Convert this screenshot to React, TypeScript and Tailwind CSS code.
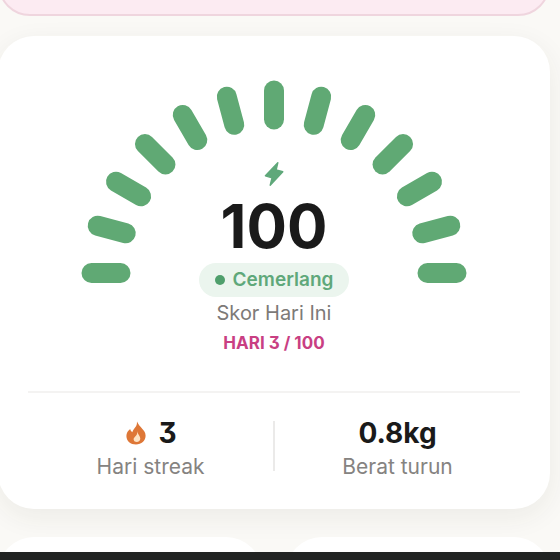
import type { ReactNode } from 'react';

const CENTER = 193;
const ANGLES = Array.from({ length: 13 }, (_, i) => i * 15);

function ScoreArc() {
  return (
    <svg className="w-full" viewBox="0 0 386 203" fill="none" aria-hidden="true">
      {ANGLES.map((angle) => (
        <line
          key={angle}
          x1={10.5}
          y1={CENTER}
          x2={39.5}
          y2={CENTER}
          stroke="#60a974"
          strokeWidth={20}
          strokeLinecap="round"
          transform={`rotate(${angle} ${CENTER} ${CENTER})`}
        />
      ))}
    </svg>
  );
}

function BoltIcon() {
  return (
    <svg className="w-6 h-6" viewBox="0 0 24 24" aria-hidden="true">
      <path
        d="M15.8 0.8 3.4 13.8l6.600 2-1.800 7.400L20.800 9.800l-6.700-1.800z"
        fill="#5fa87a"
        stroke="#5fa87a"
        strokeWidth={1.4}
        strokeLinejoin="round"
      />
    </svg>
  );
}

function FlameIcon() {
  return (
    <svg className="w-6 h-6" viewBox="0 0 24 24" aria-hidden="true">
      <path
        fill="#de7737"
        d="M13 .6c.3 3.600-1.400 5.600-3.200 7.700-.7.9-1.300 1.800-1.500 2.900-1.100-.7-1.900-1.800-2.100-3.200C3.800 9.800 2.400 12.200 2.400 14.900c0 5 4.200 8.500 9.600 8.500s9.600-3.700 9.600-8.700C21.600 8.900 15.400 6.600 13 .6z"
      />
      <path
        fill="#fde3c4"
        d="M13.200 10.200c.3 2.900-.6 3.900-2 5.300-1.300 1.300-1.800 2.100-1.500 3.300.3 1.400 1.500 2.200 3 2.200 2 0 3.600-1.300 3.600-3.400 0-2.900-2.600-4.200-3.100-7.400z"
      />
    </svg>
  );
}

function Stat({ value, label, icon }: { value: string; label: string; icon?: ReactNode }) {
  return (
    <div className="flex flex-col items-center">
      <div className="flex items-center gap-2.5 text-[28px] leading-8 font-bold text-[#1a1a1a]">
        {icon}
        <span>{value}</span>
      </div>
      <div className="mt-1 text-[21px] leading-7 text-[#858381]">{label}</div>
    </div>
  );
}

function App() {
  return (
    <div className="h-screen flex flex-col overflow-hidden bg-[#faf9f6] font-['Inter',sans-serif] [font-feature-settings:'cv09']">
      <main className="flex-1 min-h-0 overflow-hidden">
        <div className="-ml-0.5 mr-2.5">
          {/* Bottom edge of the scrolled banner */}
          <div className="h-20 -mt-16 rounded-[32px] border-2 border-[#efd5de] bg-[#fcebf2]" />

          <section className="mt-5 rounded-[36px] bg-white px-[30px] pt-11 pb-7 shadow-[0_8px_28px_rgba(60,50,30,0.07)]">
            <div className="relative mx-auto max-w-[386px]">
              <ScoreArc />
              <div className="absolute inset-x-0 top-[82px] flex flex-col items-center">
                <BoltIcon />
                <div className="mt-2 text-6xl leading-[64px] font-bold text-[#1a1a1a]">100</div>
              </div>
            </div>

            <div className="relative -mt-5 flex flex-col items-center">
              <div className="flex items-center gap-2 h-[34px] rounded-full bg-[#ebf5ee] px-4 text-[19px] font-semibold text-[#5fa87a]">
                <span className="w-2.5 h-2.5 rounded-full bg-[#4f9f6c]" />
                Cemerlang
              </div>
              <div className="mt-1 text-xl leading-6 text-[#7d7a78]">Skor Hari Ini</div>
              <div className="mt-1.5 text-[17px] leading-6 font-bold text-[#c93f83]">HARI 3 / 100</div>
            </div>

            <div className="mt-9 border-t-2 border-[#f4f3f2] pt-6 flex items-start">
              <div className="flex-1">
                <Stat value="3" label="Hari streak" icon={<FlameIcon />} />
              </div>
              <div className="mt-1 w-0.5 h-[50px] bg-[#ebeae9]" />
              <div className="flex-1">
                <Stat value="0.8kg" label="Berat turun" />
              </div>
            </div>
          </section>

          <div className="mt-7 grid grid-cols-2 gap-6">
            <div className="h-40 rounded-[36px] bg-white" />
            <div className="h-40 rounded-[36px] bg-white" />
          </div>
        </div>
      </main>
      <footer className="h-2 bg-[#222423]" />
    </div>
  );
}

export default App;
